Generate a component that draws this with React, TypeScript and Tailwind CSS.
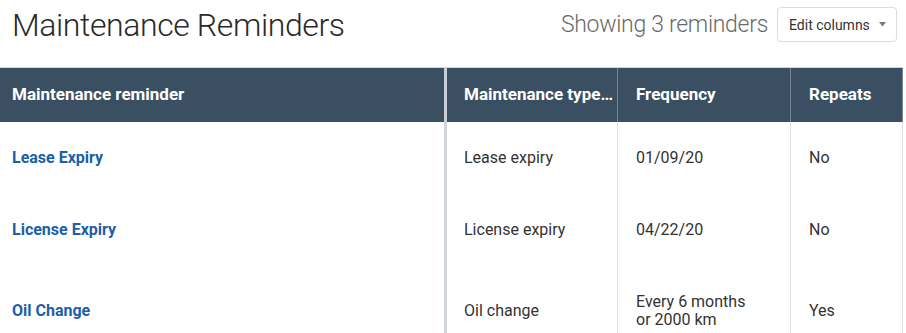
import React from "react";

const rows = [
  { name: "Lease Expiry", type: "Lease expiry", freq: ["01/09/20"], repeats: "No", h: "h-[72px]" },
  { name: "License Expiry", type: "License expiry", freq: ["04/22/20"], repeats: "No", h: "h-[72px]" },
  { name: "Oil Change", type: "Oil change", freq: ["Every 6 months", "or 2000 km"], repeats: "Yes", h: "h-[90px]" },
];

export default function App() {
  return (
    <div className="w-[906px] h-[333px] overflow-hidden bg-white font-['Roboto','Liberation_Sans',sans-serif]">
      <div className="flex items-start justify-between h-[67px]">
        <h1 className="ml-[12px] mt-[5px] text-[32px] font-light leading-[40px] tracking-[-0.4px] text-[#2a2a2a]">
          Maintenance Reminders
        </h1>
        <div className="flex items-center mt-[7px] mr-[9px]">
          <span className="text-[23px] font-light leading-[30px] tracking-[-0.3px] text-[#6a6a6a]">
            Showing 3 reminders
          </span>
          <button className="ml-[9px] flex h-[35px] w-[120px] items-center rounded-[4px] border border-[#dcdcdc] bg-white pl-[11px] text-[14px] leading-[16px] text-[#333333]">
            <span>Edit columns</span>
            <svg className="ml-[9px]" width="7" height="5" viewBox="0 0 7 5">
              <path d="M0 0 L7 0 L3.5 4.5 Z" fill="#7a7a7a" />
            </svg>
          </button>
        </div>
      </div>

      <div className="w-[903px]">
        <div className="flex h-[55px] border-t border-[#cfd4da] bg-[#3b4f63] text-[17px] font-bold text-white">
          <div className="flex w-[447px] items-center border-r-[3px] border-[#c9cfd6] pl-[12px]">
            Maintenance reminder
          </div>
          <div className="flex w-[171px] min-w-0 items-center border-r border-[#75879a] pl-[17px] pr-[3px]">
            <span className="block min-w-0 truncate">Maintenance type name</span>
          </div>
          <div className="flex w-[173px] items-center border-r border-[#75879a] pl-[18px]">Frequency</div>
          <div className="flex w-[112px] items-center border-r border-[#75879a] pl-[18px]">Repeats</div>
        </div>

        {rows.map((r) => (
          <div key={r.name} className={`flex ${r.h} text-[16px] leading-[18px] text-[#333333]`}>
            <div className="flex w-[447px] items-center border-r-[3px] border-[#cfd4da] pl-[12px]">
              <span className="font-bold text-[#1b5fa9]">{r.name}</span>
            </div>
            <div className="flex w-[171px] items-center border-r border-[#dde1e5] pl-[17px]">{r.type}</div>
            <div className="flex w-[173px] flex-col justify-center border-r border-[#dde1e5] pl-[18px]">
              {r.freq.map((f) => (
                <span key={f}>{f}</span>
              ))}
            </div>
            <div className="flex w-[112px] items-center border-r border-[#dde1e5] pl-[18px]">{r.repeats}</div>
          </div>
        ))}
      </div>
    </div>
  );
}
